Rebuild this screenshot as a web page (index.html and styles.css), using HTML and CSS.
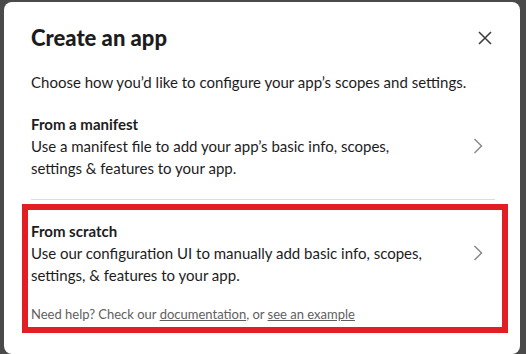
FILE: index.html
```html
<!DOCTYPE html>
<html lang="en">
<head>
    <meta charset="UTF-8" />
    <title>Create an app</title>
    <link rel="stylesheet" href="styles.css">
</head>
<body>
    <div class="modal">
        <!-- Header with title and close button -->
        <div class="modal-header">
            <h1>Create an app</h1>
            <svg class="close-icon" width="14" height="14" viewBox="0 0 14 14">
                <path d="M1 1 L13 13 M13 1 L1 13" stroke="#3f3f3f" stroke-width="1.6" fill="none" />
            </svg>
        </div>

        <p class="intro">Choose how you’d like to configure your app’s scopes and settings.</p>

        <!-- Option 1 -->
        <div class="option">
            <div class="option-text">
                <div class="option-title">From a manifest</div>
                <div class="option-desc">Use a manifest file to add your app’s basic info, scopes, settings &amp; features to your app.</div>
            </div>
            <svg class="chevron" width="10" height="16" viewBox="0 0 10 16">
                <path d="M1.5 1 L8.5 8 L1.5 15" stroke="#8b8b8b" stroke-width="1.5" fill="none" />
            </svg>
        </div>

        <div class="divider"></div>

        <!-- Option 2, marked with the red box -->
        <div class="highlight">
            <div class="option option-scratch">
                <div class="option-text">
                    <div class="option-title">From scratch</div>
                    <div class="option-desc">Use our configuration UI to manually add basic info, scopes, settings, &amp; features to your app.</div>
                </div>
                <svg class="chevron" width="10" height="16" viewBox="0 0 10 16">
                    <path d="M1.5 1 L8.5 8 L1.5 15" stroke="#8b8b8b" stroke-width="1.5" fill="none" />
                </svg>
            </div>
            <p class="help">Need help? Check our <a href="#">documentation</a>, or <a href="#">see an example</a></p>
        </div>
    </div>
</body>
</html>
```

FILE: styles.css
```css
body, html {
    margin: 0;
    padding: 0;
    height: 100%;
    overflow: hidden;
    background-color: #4a4a4a;
    font-family: 'Lato', 'Liberation Sans', sans-serif;
    color: #1d1c1d;
}

.modal {
    margin: 2px 6px 0 4px;
    height: calc(100% - 2px);
    background-color: white;
    border-radius: 8px;
    padding: 22px 25px 0 27px;
    box-sizing: border-box;
    overflow: hidden;
}

.modal-header {
    display: flex;
    justify-content: space-between;
    align-items: center;
}

.modal-header h1 {
    margin: 0;
    font-size: 22px;
    line-height: 28px;
    font-weight: 900;
}

.close-icon {
    margin-right: 3px;
}

.intro {
    margin: 19px 0 20px 0;
    font-size: 15px;
    line-height: 22px;
}

/* Each choice row */
.option {
    display: flex;
    align-items: center;
    justify-content: space-between;
}

.option-text {
    width: 400px;
    font-size: 15px;
    line-height: 22px;
}

.option-title {
    font-weight: 700;
}

.chevron {
    margin-right: 12px;
}

.divider {
    margin-top: 20px;
    border-top: 1px solid #dddddd;
}

/* Red annotation box */
.highlight {
    margin: 4px -13px 0 -9px;
    border: 6px solid #e21d23;
    padding: 10px 19px 4px 3px;
}

.option-scratch .chevron {
    margin-right: 0;
}

.help {
    margin: 19px 0 0 0;
    font-size: 13px;
    line-height: 18px;
    color: #616061;
}

.help a {
    color: #616061;
    text-decoration: underline;
}
```
